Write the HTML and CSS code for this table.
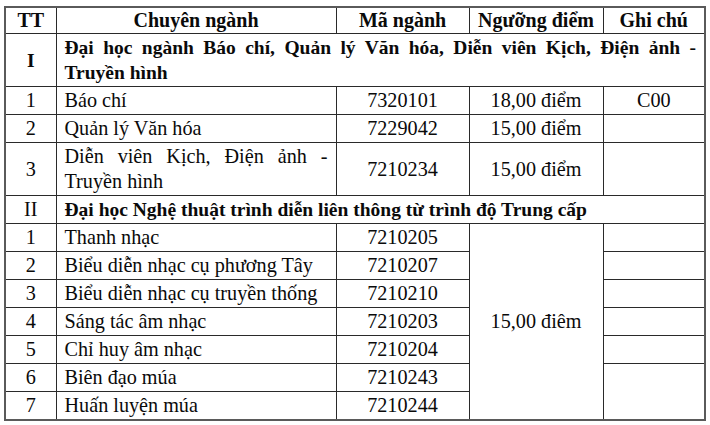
FILE: index.html
```html
<!DOCTYPE html>
<html lang="vi">
<head>
<meta charset="utf-8">
<link rel="stylesheet" href="styles.css">
</head>
<body>
<table class="tbl">
  <colgroup>
    <col class="c-tt"><col class="c-cn"><col class="c-mn"><col class="c-nd"><col class="c-gc">
  </colgroup>
  <tr class="head">
    <th>TT</th><th>Chuyên ngành</th><th>Mã ngành</th><th>Ngưỡng điểm</th><th>Ghi chú</th>
  </tr>
  <tr class="sec">
    <td class="ctr">I</td>
    <td colspan="4" class="just">Đại học ngành Báo chí, Quản lý Văn hóa, Diễn viên Kịch, Điện ảnh - Truyền hình</td>
  </tr>
  <tr>
    <td class="ctr">1</td><td class="name">Báo chí</td><td class="ctr">7320101</td><td class="ctr">18,00 điểm</td><td class="ctr">C00</td>
  </tr>
  <tr>
    <td class="ctr">2</td><td class="name">Quản lý Văn hóa</td><td class="ctr">7229042</td><td class="ctr">15,00 điểm</td><td></td>
  </tr>
  <tr>
    <td class="ctr">3</td><td class="name just">Diễn viên Kịch, Điện ảnh - Truyền hình</td><td class="ctr">7210234</td><td class="ctr">15,00 điểm</td><td></td>
  </tr>
  <tr class="sec">
    <td class="ctr norm">II</td>
    <td colspan="4">Đại học Nghệ thuật trình diễn liên thông từ trình độ Trung cấp</td>
  </tr>
  <tr>
    <td class="ctr">1</td><td class="name">Thanh nhạc</td><td class="ctr">7210205</td><td class="ctr" rowspan="7">15,00 điêm</td><td></td>
  </tr>
  <tr>
    <td class="ctr">2</td><td class="name">Biểu diễn nhạc cụ phương Tây</td><td class="ctr">7210207</td><td></td>
  </tr>
  <tr>
    <td class="ctr">3</td><td class="name">Biểu diễn nhạc cụ truyền thống</td><td class="ctr">7210210</td><td></td>
  </tr>
  <tr>
    <td class="ctr">4</td><td class="name">Sáng tác âm nhạc</td><td class="ctr">7210203</td><td></td>
  </tr>
  <tr>
    <td class="ctr">5</td><td class="name">Chỉ huy âm nhạc</td><td class="ctr">7210204</td><td></td>
  </tr>
  <tr>
    <td class="ctr">6</td><td class="name">Biên đạo múa</td><td class="ctr">7210243</td><td rowspan="2"></td>
  </tr>
  <tr>
    <td class="ctr">7</td><td class="name">Huấn luyện múa</td><td class="ctr">7210244</td>
  </tr>
</table>
</body>
</html>
```

FILE: styles.css
```css
html, body {
  margin: 0;
  padding: 0;
  background: #ffffff;
}
body {
  padding: 6px 0 0 4px;
  font-family: "Liberation Serif", "Times New Roman", serif;
  font-size: 20.2px;
  color: #0a0a0a;
}
.tbl {
  border-collapse: collapse;
  table-layout: fixed;
  width: 700px;
  border: 2px solid #5a5a5a;
}
.c-tt { width: 51px; }
.c-cn { width: 280px; }
.c-mn { width: 133px; }
.c-nd { width: 134px; }
.c-gc { width: 102px; }
.tbl th,
.tbl td {
  border: 1px solid #2a2a2a;
  padding: 1px 8px;
  line-height: 25px;
  height: 25px;
  vertical-align: middle;
}
.tbl th {
  font-weight: bold;
  font-size: 20px;
  text-align: center;
}
.head th {
  padding-top: 0;
  padding-bottom: 0;
}
.sec td {
  font-weight: bold;
  font-size: 19.5px;
}
.sec td.norm {
  font-weight: normal;
  font-size: 20.2px;
}
.ctr {
  text-align: center;
}
.name {
  text-align: left;
}
.just {
  text-align: justify;
}
```
